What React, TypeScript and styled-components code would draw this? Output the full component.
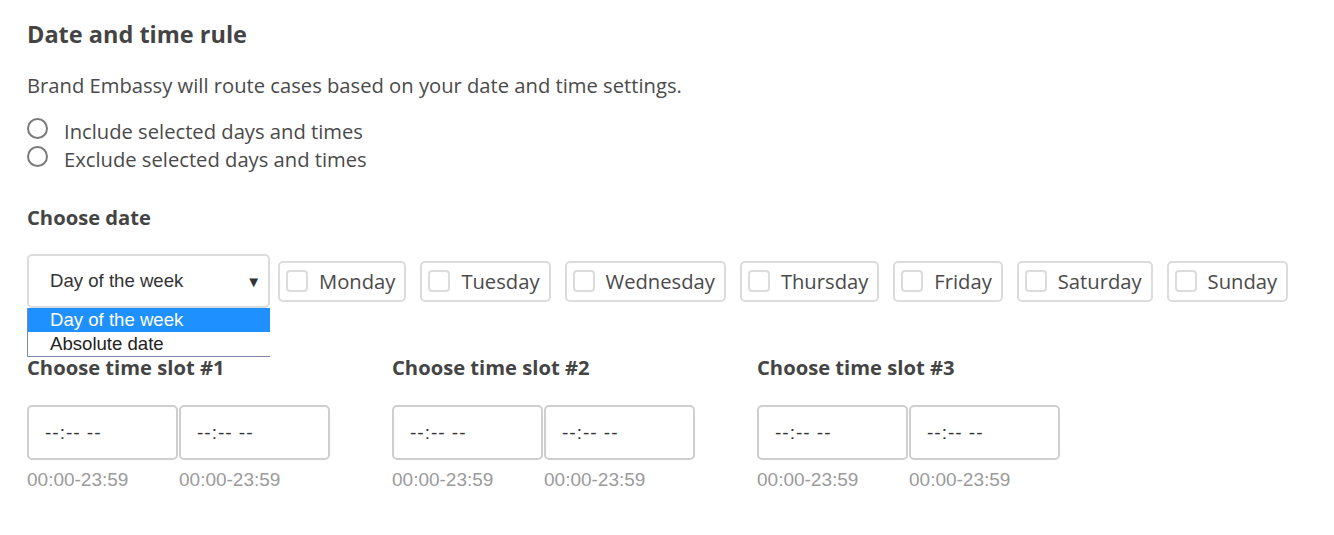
import React from 'react';
import styled, { createGlobalStyle } from 'styled-components';

const GlobalStyle = createGlobalStyle`
  html, body {
    margin: 0;
    padding: 0;
    background: #ffffff;
  }
  body {
    font-family: 'Open Sans', 'Liberation Sans', sans-serif;
    color: #4a4a4a;
  }
`;

const Page = styled.div`
  padding: 18px 27px 40px;
`;

const Title = styled.h2`
  margin: 0;
  font-size: 23.5px;
  font-weight: 700;
  line-height: 32px;
  color: #444444;
`;

const Description = styled.p`
  margin: 21px 0 0;
  font-size: 20.2px;
  line-height: 28px;
  color: #4a4a4a;
`;

const RadioGroup = styled.div`
  margin-top: 18px;
  display: flex;
  flex-direction: column;
`;

const RadioRow = styled.label`
  display: flex;
  align-items: center;
  height: 28px;
  font-size: 20.2px;
  color: #4a4a4a;
`;

const RadioCircle = styled.span`
  width: 17px;
  height: 17px;
  border: 2px solid #7a7a7a;
  border-radius: 50%;
  margin-right: 16px;
  margin-top: -5px;
  box-sizing: content-box;
`;

const SectionHeading = styled.h3<{ $top: number }>`
  margin: ${(p) => p.$top}px 0 0;
  font-size: 20.2px;
  font-weight: 700;
  line-height: 26px;
  color: #444444;
`;

const DayRow = styled.div`
  margin-top: 24px;
  display: flex;
  align-items: center;
  gap: 14px;
`;

const SelectWrap = styled.div`
  position: relative;
  margin-right: -6px;
`;

const SelectBox = styled.div`
  width: 243px;
  height: 54px;
  box-sizing: border-box;
  border: 2px solid #dcdcdc;
  border-radius: 5px;
  display: flex;
  align-items: center;
  justify-content: space-between;
  padding: 0 7px 0 21px;
  font-family: 'Liberation Sans', Arial, sans-serif;
  font-size: 18.6px;
  color: #333333;
`;

const Arrow = styled.span`
  font-size: 15px;
  color: #333;
`;

const OptionList = styled.ul`
  position: absolute;
  top: 54px;
  left: 0;
  width: 243px;
  margin: 0;
  padding: 0;
  list-style: none;
  background: #ffffff;
  border-left: 1px solid #7a8aa8;
  border-bottom: 1px solid #7a8aa8;
  box-sizing: border-box;
  font-family: 'Liberation Sans', Arial, sans-serif;
  font-size: 18.6px;
  z-index: 2;
`;

const OptionItem = styled.li<{ $active?: boolean }>`
  height: 24px;
  line-height: 24px;
  padding-left: 22px;
  background: ${(p) => (p.$active ? '#1e90ff' : '#ffffff')};
  color: ${(p) => (p.$active ? '#ffffff' : '#222222')};
`;

const DayChip = styled.label`
  display: flex;
  align-items: center;
  height: 41px;
  box-sizing: border-box;
  border: 2px solid #dcdcdc;
  border-radius: 5px;
  padding: 0 9px 0 6px;
  font-size: 20.2px;
  color: #4a4a4a;
`;

const CheckBox = styled.span`
  width: 18px;
  height: 18px;
  border: 2px solid #dcdcdc;
  border-radius: 4px;
  margin-right: 11px;
`;

const SlotRow = styled.div`
  display: flex;
  gap: 62px;
`;

const Slot = styled.div`
  display: flex;
  flex-direction: column;
`;

const InputPair = styled.div`
  margin-top: 25px;
  display: flex;
  gap: 1px;
`;

const TimeField = styled.div`
  display: flex;
  flex-direction: column;
`;

const TimeBox = styled.div`
  width: 151px;
  height: 55px;
  box-sizing: border-box;
  border: 2px solid #cfcfcf;
  border-radius: 5px;
  display: flex;
  align-items: center;
  padding-left: 16px;
  font-family: 'Liberation Sans', Arial, sans-serif;
  font-size: 19px;
  letter-spacing: 1px;
  color: #333333;
`;

const Hint = styled.span`
  margin-top: 7px;
  font-family: 'Liberation Sans', Arial, sans-serif;
  font-size: 19px;
  line-height: 26px;
  color: #9b9b9b;
`;

const days = ['Monday', 'Tuesday', 'Wednesday', 'Thursday', 'Friday', 'Saturday', 'Sunday'];

const App: React.FC = () => {
  return (
    <>
      <GlobalStyle />
      <Page>
        <Title>Date and time rule</Title>
        <Description>Brand Embassy will route cases based on your date and time settings.</Description>
        <RadioGroup>
          <RadioRow>
            <RadioCircle />
            Include selected days and times
          </RadioRow>
          <RadioRow>
            <RadioCircle />
            Exclude selected days and times
          </RadioRow>
        </RadioGroup>

        <SectionHeading $top={31}>Choose date</SectionHeading>
        <DayRow>
          <SelectWrap>
            <SelectBox>
              Day of the week
              <Arrow>▼</Arrow>
            </SelectBox>
            <OptionList>
              <OptionItem $active>Day of the week</OptionItem>
              <OptionItem>Absolute date</OptionItem>
            </OptionList>
          </SelectWrap>
          {days.map((d) => (
            <DayChip key={d}>
              <CheckBox />
              {d}
            </DayChip>
          ))}
        </DayRow>

        <SlotRow>
          {[1, 2, 3].map((n) => (
            <Slot key={n}>
              <SectionHeading $top={46}>Choose time slot #{n}</SectionHeading>
              <InputPair>
                {[0, 1].map((i) => (
                  <TimeField key={i}>
                    <TimeBox>--:-- --</TimeBox>
                    <Hint>00:00-23:59</Hint>
                  </TimeField>
                ))}
              </InputPair>
            </Slot>
          ))}
        </SlotRow>
      </Page>
    </>
  );
};

export default App;
